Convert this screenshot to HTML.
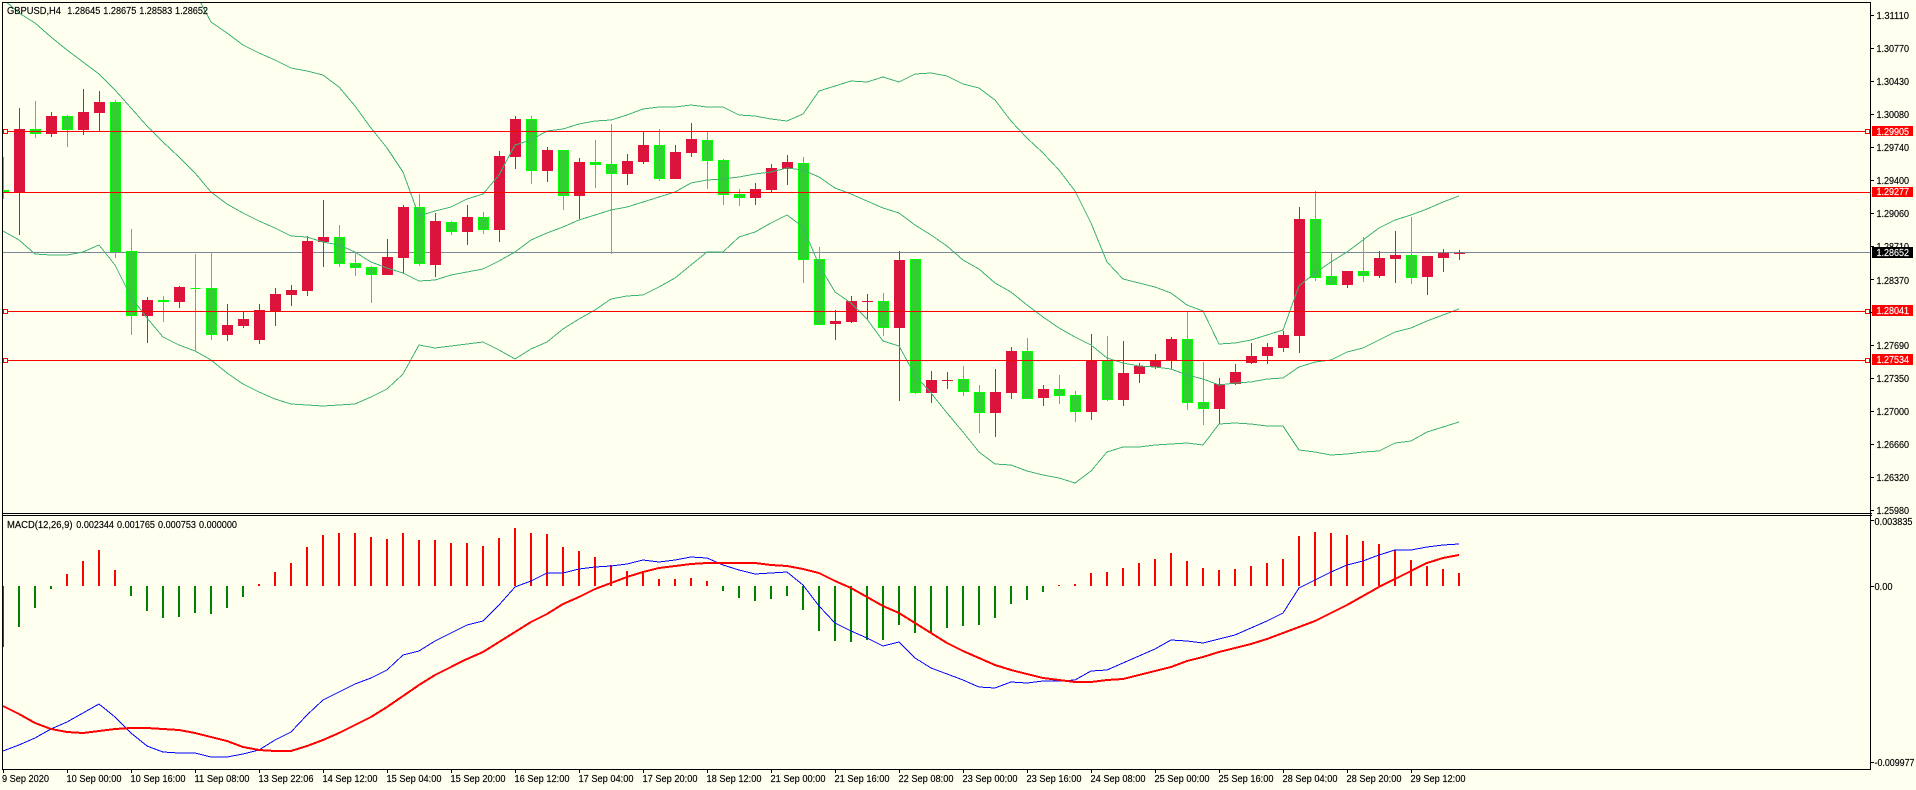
<!DOCTYPE html>
<html><head><meta charset="utf-8"><title>GBPUSD,H4</title>
<style>
html,body{margin:0;padding:0;background:#FFFFF0;width:1916px;height:790px;overflow:hidden}
svg{display:block}
text{font-family:"Liberation Sans",Arial,sans-serif;font-size:10px;fill:#000;stroke:#000;stroke-width:.15px}
text.w{fill:#fff;stroke:#fff}
</style></head><body>
<svg width="1916" height="790" viewBox="0 0 1916 790" xmlns="http://www.w3.org/2000/svg">
<defs>
<clipPath id="m"><rect x="3" y="3" width="1867" height="510"/></clipPath>
<clipPath id="s"><rect x="3" y="516" width="1867" height="253"/></clipPath>
</defs>
<rect width="1916" height="790" fill="#FFFFF0"/>
<g shape-rendering="crispEdges">
<g clip-path="url(#m)">
<path d="M3 252.5H1870" stroke="#778899" fill="none"/>
<path fill="none" stroke="#DC143C" d="M19.5 108V235M51.5 112V137M83.5 89V135M99.5 91V131M147.5 297V343M179.5 286V308M227.5 304V341M243.5 311V328M259.5 304V344M275.5 288V326M291.5 285V306M307.5 236V296M323.5 200V267M387.5 239V275M403.5 205V273M435.5 213V277M467.5 205V245M499.5 151V242M515.5 116V169M547.5 147V182M579.5 158V219M627.5 154V185M643.5 131V164M675.5 145V179M691.5 123V157M755.5 183V205M771.5 164V192M787.5 155V185M835.5 310V340M851.5 296V323M867.5 294V319M899.5 251V401M931.5 371V403M947.5 372V389M995.5 369V437M1011.5 347V399M1043.5 385V406M1091.5 334V420M1123.5 341V406M1139.5 363V383M1155.5 354V369M1171.5 337V369M1219.5 378V424M1235.5 364V385M1251.5 343V364M1267.5 343V364M1283.5 331V352M1299.5 207V353M1347.5 271V288M1379.5 251V278M1395.5 231V283M1427.5 256V295M1443.5 249V272M1459.5 250V260"/>
<path fill="#DC143C" d="M14 129h11V192h-11zM46 116h11V134h-11zM78 112h11V130h-11zM94 102h11V113h-11zM142 300h11V316h-11zM174 287h11V302h-11zM222 325h11V335h-11zM238 319h11V326h-11zM254 310h11V340h-11zM270 294h11V312h-11zM286 290h11V295h-11zM302 241h11V291h-11zM318 237h11V242h-11zM382 257h11V275h-11zM398 207h11V258h-11zM430 221h11V265h-11zM462 217h11V232h-11zM494 156h11V230h-11zM510 119h11V157h-11zM542 150h11V171h-11zM574 162h11V196h-11zM622 161h11V174h-11zM638 145h11V162h-11zM670 152h11V179h-11zM686 139h11V153h-11zM750 189h11V198h-11zM766 168h11V190h-11zM782 162h11V169h-11zM830 321h11V324h-11zM846 301h11V322h-11zM862 301h11V302h-11zM894 260h11V328h-11zM926 380h11V393h-11zM942 380h11V381h-11zM990 392h11V413h-11zM1006 351h11V393h-11zM1038 389h11V398h-11zM1086 360h11V412h-11zM1118 373h11V400h-11zM1134 366h11V374h-11zM1150 360h11V367h-11zM1166 339h11V360h-11zM1214 384h11V409h-11zM1230 372h11V384h-11zM1246 356h11V363h-11zM1262 347h11V356h-11zM1278 335h11V348h-11zM1294 219h11V336h-11zM1342 271h11V285h-11zM1374 258h11V276h-11zM1390 255h11V259h-11zM1422 256h11V277h-11zM1438 253h11V258h-11zM1454 253h11V254h-11z"/>
<path fill="none" stroke="#00FF00" d="M3.5 157V199M35.5 101V138M67.5 115V147M115.5 100V258M131.5 229V335M163.5 296V322M195.5 254V351M211.5 252V340M339.5 225V267M355.5 252V276M371.5 266V303M419.5 194V266M451.5 221V235M483.5 212V234M531.5 116V184M563.5 150V210M595.5 140V188M611.5 124V254M659.5 129V181M707.5 131V189M723.5 159V205M739.5 189V206M803.5 157V283M819.5 247V325M883.5 293V336M915.5 259V394M963.5 366V396M979.5 385V433M1027.5 338V399M1059.5 375V404M1075.5 391V422M1107.5 336V401M1187.5 312V410M1203.5 362V425M1315.5 191V281M1331.5 252V285M1363.5 237V282M1411.5 217V284"/>
<path fill="#32CD32" stroke="#00FF00" d="M-1.5 190.5h10V191.5h-10zM30.5 129.5h10V133.5h-10zM62.5 116.5h10V129.5h-10zM110.5 102.5h10V251.5h-10zM126.5 251.5h10V315.5h-10zM158.5 300.5h10V301.5h-10zM190.5 288.5h10V288.5h-10zM206.5 288.5h10V334.5h-10zM334.5 237.5h10V263.5h-10zM350.5 263.5h10V267.5h-10zM366.5 267.5h10V274.5h-10zM414.5 207.5h10V263.5h-10zM446.5 222.5h10V231.5h-10zM478.5 217.5h10V229.5h-10zM526.5 119.5h10V170.5h-10zM558.5 150.5h10V195.5h-10zM590.5 162.5h10V164.5h-10zM606.5 164.5h10V173.5h-10zM654.5 145.5h10V178.5h-10zM702.5 140.5h10V160.5h-10zM718.5 160.5h10V194.5h-10zM734.5 194.5h10V197.5h-10zM798.5 163.5h10V259.5h-10zM814.5 259.5h10V324.5h-10zM878.5 301.5h10V327.5h-10zM910.5 259.5h10V392.5h-10zM958.5 379.5h10V391.5h-10zM974.5 392.5h10V412.5h-10zM1022.5 351.5h10V398.5h-10zM1054.5 389.5h10V395.5h-10zM1070.5 395.5h10V411.5h-10zM1102.5 360.5h10V399.5h-10zM1182.5 339.5h10V402.5h-10zM1198.5 402.5h10V408.5h-10zM1310.5 219.5h10V277.5h-10zM1326.5 276.5h10V284.5h-10zM1358.5 271.5h10V275.5h-10zM1406.5 255.5h10V277.5h-10z"/>
<g fill="none" stroke="#3CB371">
<polyline points="195,-8 211,22 227,33 243,45 259,53 275,60 291,68 307,71 323,75 339,87 355,106 371,128 387,148 403,172 419,216 435,211 451,207 467,199 483,194 499,175 515,145 531,140 547,131 563,129 579,124 595,121 611,120 627,115 643,109 659,107 675,107 691,105 707,107 723,107 739,115 755,116 771,119 787,121 803,114 819,91 835,86 851,81 867,82 883,77 899,82 915,74 931,73 947,76 963,84 979,88 995,100 1011,121 1027,138 1043,153 1059,170 1075,191 1091,223 1107,262 1123,279 1139,283 1155,287 1171,293 1187,305 1203,311 1219,344 1235,343 1251,340 1267,335 1283,330 1299,286 1315,273 1331,262 1347,252 1363,240 1379,228 1395,220 1411,215 1427,209 1443,202 1459,196"/>
<polyline points="3,-1 19,13 35,23 51,37 67,50 83,62 99,74 115,90 131,108 147,126 163,142 179,157 195,173 211,192 227,204 243,213 259,221 275,228 291,236 307,237 323,242 339,245 355,252 371,262 387,268 403,273 419,281 435,280 451,275 467,272 483,269 499,261 515,252 531,240 547,233 563,227 579,220 595,215 611,210 627,207 643,202 659,197 675,192 691,183 707,180 723,179 739,177 755,174 771,172 787,168 803,170 819,177 835,188 851,194 867,201 883,208 899,213 915,225 931,235 947,246 963,260 979,269 995,283 1011,292 1027,305 1043,317 1059,328 1075,337 1091,345 1107,358 1123,363 1139,366 1155,367 1171,369 1187,375 1203,379 1219,385 1235,383 1251,382 1267,379 1283,378 1299,367 1315,362 1331,360 1347,352 1363,348 1379,340 1395,332 1411,328 1427,321 1443,315 1459,309"/>
<polyline points="3,231 19,240 35,254 51,255 67,255 83,252 99,245 115,265 131,297 147,318 163,337 179,345 195,351 211,360 227,373 243,384 259,392 275,399 291,404 307,405 323,406 339,405 355,404 371,397 387,389 403,374 419,345 435,348 451,346 467,344 483,342 499,350 515,359 531,349 547,342 563,329 579,319 595,310 611,299 627,296 643,295 659,287 675,278 691,265 707,252 723,252 739,237 755,232 771,223 787,215 803,227 819,265 835,292 851,303 867,319 883,341 899,346 915,375 931,393 947,413 963,432 979,452 995,464 1011,465 1027,471 1043,475 1059,478 1075,483 1091,471 1107,452 1123,447 1139,447 1155,445 1171,444 1187,443 1203,445 1219,424 1235,423 1251,424 1267,426 1283,426 1299,450 1315,452 1331,455 1347,454 1363,452 1379,451 1395,443 1411,441 1427,432 1443,427 1459,422"/>
</g>
<path fill="none" stroke="#FF0000" d="M3 131.5H1870M3 192.5H1870M3 311.5H1870M3 360.5H1870"/>
<path fill="#FFFFF0" stroke="#FF0000" d="M3.5 129.5h4v4h-4zM3.5 309.5h4v4h-4zM3.5 358.5h4v4h-4zM1865.5 129.5h4v4h-4zM1865.5 309.5h4v4h-4zM1865.5 358.5h4v4h-4z"/>
</g>
<g clip-path="url(#s)">
<path fill="none" stroke="#FF0000" stroke-width="2" d="M67 586V574M83 586V561M99 586V550M115 586V570M259 586V584M275 586V572M291 586V563M307 586V547M323 586V535M339 586V533M355 586V533M371 586V537M387 586V539M403 586V533M419 586V540M435 586V540M451 586V543M467 586V543M483 586V546M499 586V538M515 586V528M531 586V533M547 586V534M563 586V547M579 586V551M595 586V557M611 586V565M627 586V571M643 586V572M659 586V579M675 586V579M691 586V578M707 586V581M1059 586V585M1075 586V584M1091 586V573M1107 586V572M1123 586V568M1139 586V563M1155 586V559M1171 586V553M1187 586V561M1203 586V568M1219 586V570M1235 586V569M1251 586V566M1267 586V563M1283 586V559M1299 586V536M1315 586V532M1331 586V533M1347 586V535M1363 586V541M1379 586V544M1395 586V550M1411 586V560M1427 586V566M1443 586V569M1459 586V573"/>
<path fill="none" stroke="#008000" stroke-width="2" d="M3 586V647M19 586V627M35 586V608M51 586V589M131 586V596M147 586V611M163 586V618M179 586V617M195 586V613M211 586V614M227 586V608M243 586V597M723 586V591M739 586V598M755 586V601M771 586V599M787 586V596M803 586V610M819 586V631M835 586V641M851 586V642M867 586V640M883 586V640M899 586V625M915 586V633M931 586V633M947 586V628M963 586V626M979 586V625M995 586V618M1011 586V604M1027 586V600M1043 586V592"/>
<polyline fill="none" stroke="#0000FF" points="3,751 19,745 35,738 51,729 67,722 83,713 99,704 115,717 131,733 147,746 163,752 179,753 195,753 211,757 227,757 243,754 259,750 275,740 291,732 307,715 323,700 339,692 355,684 371,678 387,670 403,655 419,651 435,641 451,633 467,625 483,621 499,605 515,587 531,581 547,573 563,573 579,569 595,567 611,566 627,564 643,560 659,562 675,560 691,557 707,558 723,565 739,570 755,574 771,573 787,572 803,585 819,606 835,623 851,631 867,638 883,646 899,642 915,658 931,668 947,674 963,680 979,687 995,688 1011,682 1027,683 1043,681 1059,681 1075,680 1091,671 1107,670 1123,663 1139,656 1155,649 1171,640 1187,641 1203,643 1219,639 1235,635 1251,628 1267,621 1283,613 1299,588 1315,580 1331,572 1347,565 1363,561 1379,555 1395,550 1411,550 1427,547 1443,545 1459,544"/>
<polyline fill="none" stroke="#FF0000" stroke-width="2" points="3,706 19,714 35,723 51,729 67,732 83,733 99,731 115,729 131,728 147,728 163,729 179,730 195,733 211,737 227,741 243,747 259,750 275,751 291,751 307,746 323,740 339,733 355,725 371,717 387,707 403,696 419,685 435,675 451,667 467,659 483,652 499,642 515,632 531,622 547,614 563,604 579,597 595,589 611,583 627,577 643,572 659,568 675,566 691,564 707,563 723,563 739,563 755,563 771,565 787,566 803,569 819,573 835,581 851,588 867,597 883,606 899,613 915,623 931,633 947,643 963,651 979,658 995,665 1011,670 1027,674 1043,678 1059,680 1075,682 1091,682 1107,680 1123,679 1139,675 1155,671 1171,667 1187,661 1203,657 1219,652 1235,648 1251,644 1267,639 1283,633 1299,627 1315,621 1331,613 1347,605 1363,596 1379,587 1395,579 1411,571 1427,563 1443,558 1459,555"/>
</g>
<path fill="none" stroke="#000" d="M2.5 2.5H1870.5V769.5H2.5ZM2 513.5H1872M2 515.5H1872"/>
<path fill="none" stroke="#000" d="M1871 15.5h3M1871 48.5h3M1871 81.5h3M1871 114.5h3M1871 147.5h3M1871 180.5h3M1871 213.5h3M1871 246.5h3M1871 279.5h3M1871 312.5h3M1871 345.5h3M1871 378.5h3M1871 411.5h3M1871 444.5h3M1871 477.5h3M1871 510.5h3M1871 520.5h3M1871 586.5h3M1871 762.5h3"/>
<path fill="none" stroke="#000" d="M3.5 770v3M67.5 770v3M131.5 770v3M195.5 770v3M259.5 770v3M323.5 770v3M387.5 770v3M451.5 770v3M515.5 770v3M579.5 770v3M643.5 770v3M707.5 770v3M771.5 770v3M835.5 770v3M899.5 770v3M963.5 770v3M1027.5 770v3M1091.5 770v3M1155.5 770v3M1219.5 770v3M1283.5 770v3M1347.5 770v3M1411.5 770v3"/>
</g>
<g>
<text x="7" y="14" textLength="54" lengthAdjust="spacingAndGlyphs">GBPUSD,H4</text>
<text x="67.3" y="14" textLength="33" lengthAdjust="spacingAndGlyphs">1.28645</text>
<text x="103.3" y="14" textLength="33" lengthAdjust="spacingAndGlyphs">1.28675</text>
<text x="139.2" y="14" textLength="33" lengthAdjust="spacingAndGlyphs">1.28583</text>
<text x="175" y="14" textLength="33" lengthAdjust="spacingAndGlyphs">1.28652</text>
<text x="7" y="528" textLength="65.5" lengthAdjust="spacingAndGlyphs">MACD(12,26,9)</text>
<text x="76.3" y="528" textLength="37.6" lengthAdjust="spacingAndGlyphs">0.002344</text>
<text x="117" y="528" textLength="38" lengthAdjust="spacingAndGlyphs">0.001765</text>
<text x="158" y="528" textLength="38" lengthAdjust="spacingAndGlyphs">0.000753</text>
<text x="199" y="528" textLength="38" lengthAdjust="spacingAndGlyphs">0.000000</text>
<text x="1876.5" y="19" textLength="32.5" lengthAdjust="spacingAndGlyphs">1.31110</text>
<text x="1876.5" y="52" textLength="32.5" lengthAdjust="spacingAndGlyphs">1.30770</text>
<text x="1876.5" y="85" textLength="32.5" lengthAdjust="spacingAndGlyphs">1.30430</text>
<text x="1876.5" y="118" textLength="32.5" lengthAdjust="spacingAndGlyphs">1.30080</text>
<text x="1876.5" y="151" textLength="32.5" lengthAdjust="spacingAndGlyphs">1.29740</text>
<text x="1876.5" y="184" textLength="32.5" lengthAdjust="spacingAndGlyphs">1.29400</text>
<text x="1876.5" y="217" textLength="32.5" lengthAdjust="spacingAndGlyphs">1.29060</text>
<text x="1876.5" y="250" textLength="32.5" lengthAdjust="spacingAndGlyphs">1.28710</text>
<text x="1876.5" y="284" textLength="32.5" lengthAdjust="spacingAndGlyphs">1.28370</text>
<text x="1876.5" y="349" textLength="32.5" lengthAdjust="spacingAndGlyphs">1.27690</text>
<text x="1876.5" y="382" textLength="32.5" lengthAdjust="spacingAndGlyphs">1.27350</text>
<text x="1876.5" y="415" textLength="32.5" lengthAdjust="spacingAndGlyphs">1.27000</text>
<text x="1876.5" y="448" textLength="32.5" lengthAdjust="spacingAndGlyphs">1.26660</text>
<text x="1876.5" y="481" textLength="32.5" lengthAdjust="spacingAndGlyphs">1.26320</text>
<text x="1876.5" y="514" textLength="32.5" lengthAdjust="spacingAndGlyphs">1.25980</text>
<rect x="1872" y="126" width="41" height="10" fill="#FF0000" shape-rendering="crispEdges"/>
<rect x="1872" y="187" width="41" height="10" fill="#FF0000" shape-rendering="crispEdges"/>
<rect x="1872" y="305" width="41" height="11" fill="#FF0000" shape-rendering="crispEdges"/>
<rect x="1872" y="354" width="41" height="11" fill="#FF0000" shape-rendering="crispEdges"/>
<rect x="1872" y="247" width="41" height="11" fill="#000000" shape-rendering="crispEdges"/>
<text class="w" x="1876.5" y="135" textLength="32.5" lengthAdjust="spacingAndGlyphs">1.29905</text>
<text class="w" x="1876.5" y="195" textLength="32.5" lengthAdjust="spacingAndGlyphs">1.29277</text>
<text class="w" x="1876.5" y="314" textLength="32.5" lengthAdjust="spacingAndGlyphs">1.28041</text>
<text class="w" x="1876.5" y="363" textLength="32.5" lengthAdjust="spacingAndGlyphs">1.27534</text>
<text class="w" x="1876.5" y="256" textLength="32.5" lengthAdjust="spacingAndGlyphs">1.28652</text>
<text x="1874.5" y="525" textLength="38" lengthAdjust="spacingAndGlyphs">0.003835</text>
<text x="1874.5" y="590" textLength="18" lengthAdjust="spacingAndGlyphs">0.00</text>
<text x="1874.5" y="766" textLength="40" lengthAdjust="spacingAndGlyphs">-0.009977</text>
<text x="2" y="782" textLength="47" lengthAdjust="spacingAndGlyphs">9 Sep 2020</text>
<text x="66.5" y="782" textLength="55" lengthAdjust="spacingAndGlyphs">10 Sep 00:00</text>
<text x="130.5" y="782" textLength="55" lengthAdjust="spacingAndGlyphs">10 Sep 16:00</text>
<text x="194.5" y="782" textLength="55" lengthAdjust="spacingAndGlyphs">11 Sep 08:00</text>
<text x="258.5" y="782" textLength="55" lengthAdjust="spacingAndGlyphs">13 Sep 22:06</text>
<text x="322.5" y="782" textLength="55" lengthAdjust="spacingAndGlyphs">14 Sep 12:00</text>
<text x="386.5" y="782" textLength="55" lengthAdjust="spacingAndGlyphs">15 Sep 04:00</text>
<text x="450.5" y="782" textLength="55" lengthAdjust="spacingAndGlyphs">15 Sep 20:00</text>
<text x="514.5" y="782" textLength="55" lengthAdjust="spacingAndGlyphs">16 Sep 12:00</text>
<text x="578.5" y="782" textLength="55" lengthAdjust="spacingAndGlyphs">17 Sep 04:00</text>
<text x="642.5" y="782" textLength="55" lengthAdjust="spacingAndGlyphs">17 Sep 20:00</text>
<text x="706.5" y="782" textLength="55" lengthAdjust="spacingAndGlyphs">18 Sep 12:00</text>
<text x="770.5" y="782" textLength="55" lengthAdjust="spacingAndGlyphs">21 Sep 00:00</text>
<text x="834.5" y="782" textLength="55" lengthAdjust="spacingAndGlyphs">21 Sep 16:00</text>
<text x="898.5" y="782" textLength="55" lengthAdjust="spacingAndGlyphs">22 Sep 08:00</text>
<text x="962.5" y="782" textLength="55" lengthAdjust="spacingAndGlyphs">23 Sep 00:00</text>
<text x="1026.5" y="782" textLength="55" lengthAdjust="spacingAndGlyphs">23 Sep 16:00</text>
<text x="1090.5" y="782" textLength="55" lengthAdjust="spacingAndGlyphs">24 Sep 08:00</text>
<text x="1154.5" y="782" textLength="55" lengthAdjust="spacingAndGlyphs">25 Sep 00:00</text>
<text x="1218.5" y="782" textLength="55" lengthAdjust="spacingAndGlyphs">25 Sep 16:00</text>
<text x="1282.5" y="782" textLength="55" lengthAdjust="spacingAndGlyphs">28 Sep 04:00</text>
<text x="1346.5" y="782" textLength="55" lengthAdjust="spacingAndGlyphs">28 Sep 20:00</text>
<text x="1410.5" y="782" textLength="55" lengthAdjust="spacingAndGlyphs">29 Sep 12:00</text>
</g>
</svg>
</body></html>
